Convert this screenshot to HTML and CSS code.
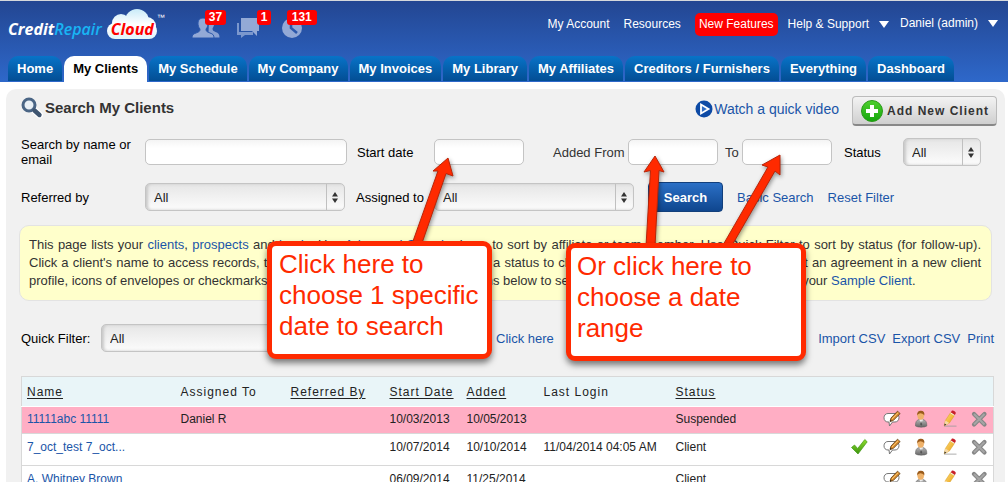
FILE: index.html
```html
<!DOCTYPE html>
<html lang="en">
<head>
<meta charset="utf-8">
<title>My Clients - Credit Repair Cloud</title>
<link rel="stylesheet" href="styles.css">
</head>
<body>
<svg class="defs" aria-hidden="true">
  <defs>
    <linearGradient id="gold" x1="0" y1="0" x2="1" y2="1"><stop offset="0" stop-color="#ffe07a"/><stop offset="1" stop-color="#e89a10"/></linearGradient>
    <linearGradient id="suit" x1="0" y1="0" x2="0" y2="1"><stop offset="0" stop-color="#b5b5b5"/><stop offset="1" stop-color="#666"/></linearGradient>
    <linearGradient id="leaf" x1="0" y1="0" x2="0" y2="1"><stop offset="0" stop-color="#8fdc2c"/><stop offset="1" stop-color="#3d9410"/></linearGradient>
    <linearGradient id="plus" x1="0" y1="0" x2="0" y2="1"><stop offset="0" stop-color="#4fd02f"/><stop offset="1" stop-color="#14a60c"/></linearGradient>
    <linearGradient id="puff" gradientUnits="userSpaceOnUse" x1="0" y1="0" x2="0" y2="31"><stop offset="0" stop-color="#c9ebf8"/><stop offset=".5" stop-color="#fff"/><stop offset="1" stop-color="#dff3fb"/></linearGradient>
    <symbol id="i-note" viewBox="0 0 18 18">
      <path d="M5 3.500h7c2.500 0 4 1.500 4 4s-1.500 4.500-4 4.500H9.500L6.500 16 6 12H5c-2.500 0-4-1.800-4-4.200S2.500 3.500 5 3.500z" fill="#fff" stroke="#777"/>
      <path d="M7 11.500l1-3.500L14.500 1.200l2.600 2.400L10.200 10.600z" fill="#d98b2b" stroke="#5d3a12" stroke-width=".8"/>
      <path d="M9 9l6.200-6.400" stroke="#f8c878"/><path d="M7 11.500l.5-1.700 1.200 1.200z" fill="#222"/>
    </symbol>
    <symbol id="i-user" viewBox="0 0 18 18">
      <path d="M3.500 16c-.3-4 1.200-6 3.500-6.500h4c2.500.5 4 2.500 3.800 6.500-2 1.600-9 1.600-11.300 0z" fill="url(#suit)" stroke="#666" stroke-width=".6"/>
      <path d="M7.300 9.200l2 5 1.600-5z" fill="#fff"/><path d="M9 10l-.8 4.500 1 1.200 1-1.200z" fill="#555"/>
      <ellipse cx="8.700" cy="5.500" rx="3.300" ry="4.200" fill="#efb26a"/>
      <path d="M5.200 5.500C4.800 2 7 .7 9 .8c2.600 0 3.800 2 3.300 4.700C11.500 4 9.500 3.400 8.500 3.300c-1.500.2-2.600.8-3.300 2.200z" fill="#9a5b1c"/>
    </symbol>
    <symbol id="i-edit" viewBox="0 0 18 18">
      <path d="M3 16.200h12.500" stroke="#999" stroke-opacity=".5" stroke-width="1.600"/>
      <path d="M3.200 15.800l1.200-5.300L9.800 2.300l4 2.600-5.500 8.200z" fill="url(#gold)" stroke="#d79a1c" stroke-width=".5"/>
      <path d="M9.800 2.300L11 .6c1.500-.4 3.400.9 3.900 2.400l-1.100 1.900z" fill="#c8202c"/>
      <path d="M9.500 2.900l4 2.500" stroke="#eee" stroke-width="1"/>
      <path d="M4.400 10.500l3.900 2.600-5.100 2.700z" fill="#f5d9a8"/><path d="M3.200 15.800l.5-2.200 1.500 1.200z" fill="#222"/>
    </symbol>
    <symbol id="i-del" viewBox="0 0 18 18">
      <path d="M4 4l10.500 10.500M14.500 4L4 14.500" stroke="#868686" stroke-width="4.200" stroke-linecap="round"/>
      <path d="M4 4l10.500 10.500M14.500 4L4 14.500" stroke="#a5a5a5" stroke-width="2"/>
    </symbol>
    <symbol id="i-check" viewBox="0 0 18 18">
      <path d="M1.500 9.500l3-2.500 3.200 3.500L14.800 1.500l2.400 2.300L8 16z" fill="url(#leaf)" stroke="#3f9a14" stroke-width=".7" stroke-linejoin="round"/>
    </symbol>
  </defs>
</svg>

<div class="page">
  <header class="top">
    <div class="bar">
      <a class="logo" href="#" aria-label="Credit Repair Cloud">
        <span class="word">Credit<span class="repair">Repair</span></span>
        <span class="cloud">
          <svg class="puff" viewBox="0 0 50 31" aria-hidden="true"><g fill="url(#puff)"><rect x="0" y="14" width="50" height="16" rx="8"/><circle cx="14" cy="14" r="9"/><circle cx="30" cy="12" r="12"/><circle cx="40" cy="17" r="9"/></g></svg>
          <span class="cloud-text">Cloud</span>
        </span>
        <span class="tm">™</span>
      </a>
      <div class="alerts">
        <a class="alert people" href="#"><svg width="28" height="20" viewBox="0 0 28 20"><path d="M17 1c4-1 6 2 5 6-.3 1.500-1 2.500-1.500 3.500 0 2 1 2.500 3 3.500 3 1 4 2.500 4 5.500h-7c0-2.500-2-4-4-5z" fill="#8aa2d3"/><path d="M0 20c0-3 1-4 4-5 3-1.200 4-1.500 4-4C6.500 9.500 6 7 6 5c0-3 2-5 5-5s5 2 5 5c0 2-.5 4.500-2 6 0 2.500 1 2.800 4 4 3 1 4 2 4 5z" fill="#93a9d6" stroke="#2d59ac"/></svg><span class="badge">37</span></a>
        <a class="alert chat" href="#"><svg width="23" height="20" viewBox="0 0 23 20"><path d="M0 5h2v9h14v3H8l-4 3v-3H0z" fill="#7b97cd"/><path d="M4 0h18v13h-2v5l-5-5H4z" fill="#93a9d6"/></svg><span class="badge">1</span></a>
        <a class="alert clock" href="#"><svg width="20" height="20" viewBox="0 0 20 20"><circle cx="10" cy="10" r="10" fill="#93a9d6"/><path d="M9 4v6l6 5" fill="none" stroke="#2d59ac" stroke-width="2.600"/></svg><span class="badge">131</span></a>
      </div>
      <nav class="links" aria-label="Account">
        <a href="#">My Account</a>
        <a href="#">Resources</a>
        <a class="new" href="#">New Features</a>
        <a class="drop" href="#">Help &amp; Support</a>
        <a class="drop admin" href="#">Daniel (admin)</a>
      </nav>
    </div>
    <nav class="tabs" aria-label="Main">
      <a href="#">Home</a><a class="on" href="#">My Clients</a><a href="#">My Schedule</a><a href="#">My Company</a><a href="#">My Invoices</a><a href="#">My Library</a><a href="#">My Affiliates</a><a href="#">Creditors / Furnishers</a><a href="#">Everything</a><a href="#">Dashboard</a>
    </nav>
  </header>

  <main class="panel">
    <div class="title">
      <svg width="22" height="22" viewBox="0 0 22 22" aria-hidden="true"><path d="M12.500 12.500l6 5.500" stroke="#fff" stroke-width="7" stroke-linecap="round"/><circle cx="8" cy="8" r="6" fill="#e9f0f6" stroke="#4a6585" stroke-width="3"/><path d="M13.500 13.500l5 4.500" stroke="#3f5570" stroke-width="4.400" stroke-linecap="round"/></svg>
      <h1>Search My Clients</h1>
      <a class="video" href="#"><svg width="18" height="18" viewBox="0 0 18 18" aria-hidden="true"><circle cx="9" cy="9" r="8.500" fill="#0d4aa5"/><path d="M6 4.500L13.500 9 6 13.500z" fill="#2f6cc4" stroke="#fff" stroke-width="1.800"/></svg>Watch a quick video</a>
      <button class="add" type="button"><svg width="22" height="22" viewBox="0 0 22 22" aria-hidden="true"><circle cx="11" cy="11" r="10.500" fill="url(#plus)" stroke="#2a9a1a"/><path d="M11 5v12M5 11h12" stroke="#fff" stroke-width="4"/></svg>Add New Client</button>
    </div>

    <form class="search">
      <div class="line">
        <label class="first" for="q">Search by name or email</label><input id="q" class="wide" type="text">
        <label class="second" for="start">Start date</label><input id="start" type="text">
        <label class="from" for="from">Added From</label><input id="from" type="text">
        <label class="to" for="to">To</label><input id="to" type="text">
        <label class="status" for="status">Status</label><span class="pick small"><select id="status"><option>All</option></select></span>
      </div>
      <div class="line">
        <label class="first" for="ref">Referred by</label><span class="pick"><select id="ref"><option>All</option></select></span>
        <label class="assigned" for="asg">Assigned to</label><span class="pick"><select id="asg"><option>All</option></select></span>
        <button class="go" type="button">Search</button>
        <a class="basic" href="#">Basic Search</a>
        <a class="reset" href="#">Reset Filter</a>
      </div>
    </form>

    <p class="note">This page lists your <a href="#">clients</a>, <a href="#">prospects</a> and <a href="#">leads</a>. Use <a href="#">Advanced Search</a> above to sort by affiliate or team member. Use Quick Filter to sort by status (for follow-up). Click a client's name to access records, to view notes and documents. Click on a status to change it. Click on the blank pages to print an agreement in a new client profile, icons of envelopes or checkmarks could show progress. Click on the icons below to send a letter or view the status. Try this on your <a href="#">Sample Client</a>.</p>

    <div class="filter">
      <label for="quick">Quick Filter:</label><span class="pick"><select id="quick"><option>All</option></select></span>
      <a class="here" href="#">Click here</a>
      <span class="export"><a href="#">Import CSV</a><a href="#">Export CSV</a><a href="#">Print</a></span>
    </div>

    <table class="clients">
      <colgroup><col class="c-name"><col class="c-assigned"><col class="c-ref"><col class="c-date"><col class="c-date"><col class="c-login"><col><col class="c-act"></colgroup>
      <thead><tr><th><a href="#">Name</a></th><th>Assigned To</th><th><a href="#">Referred By</a></th><th><a href="#">Start Date</a></th><th><a href="#">Added</a></th><th>Last Login</th><th><a href="#">Status</a></th><th></th></tr></thead>
      <tbody>
        <tr class="held"><td><a href="#">11111abc 11111</a></td><td>Daniel R</td><td></td><td>10/03/2013</td><td>10/05/2013</td><td></td><td>Suspended</td>
          <td><div class="acts"><svg><use href="#i-note"/></svg><svg><use href="#i-user"/></svg><svg><use href="#i-edit"/></svg><svg><use href="#i-del"/></svg></div></td></tr>
        <tr><td><a href="#">7_oct_test 7_oct...</a></td><td></td><td></td><td>10/07/2014</td><td>10/10/2014</td><td>11/04/2014 04:05 AM</td><td>Client</td>
          <td><div class="acts"><svg class="ok"><use href="#i-check"/></svg><svg><use href="#i-note"/></svg><svg><use href="#i-user"/></svg><svg><use href="#i-edit"/></svg><svg><use href="#i-del"/></svg></div></td></tr>
        <tr><td><a href="#">A. Whitney Brown</a></td><td></td><td></td><td>06/09/2014</td><td>11/25/2014</td><td></td><td>Client</td>
          <td><div class="acts"><svg><use href="#i-note"/></svg><svg><use href="#i-user"/></svg><svg><use href="#i-edit"/></svg><svg><use href="#i-del"/></svg></div></td></tr>
      </tbody>
    </table>
  </main>

  <svg class="arrows" width="1008" height="260" viewBox="0 0 1008 260" aria-hidden="true">
    <g fill="#ff2a00" stroke="#b82508" stroke-width="1" stroke-linejoin="round">
      <path d="M448 158L453 176 446 173.500 421 246 412 244 438 171 433 171z"/>
      <path d="M655 156L664 172 659 170.500 655 246 646 246 650.500 170.500 644 172z"/>
      <path d="M780 155L780 175 775 171 731 247 723 245 768 167 762 165z"/>
    </g>
  </svg>
  <div class="callout one">Click here to choose 1 specific date to search</div>
  <div class="callout two">Or click here to choose a date range</div>
</div>
</body>
</html>
```
FILE: styles.css
```css
* { box-sizing: border-box; }

body {
  margin: 0;
  background: #fff;
  color: #222;
  font: 13px/15px "Liberation Sans", Arial, sans-serif;
}

a { color: #1a55a8; text-decoration: none; }
.defs { position: absolute; width: 0; height: 0; }

.page {
  position: relative;
  height: 100vh;
  overflow: hidden;
}

/* Header */
.top {
  border-top: 1px solid #d5d8dc;
  background: linear-gradient(#234692, #2e68ca);
}

.bar {
  display: flex;
  align-items: flex-start;
  height: 55px;
  padding: 8px 10px 0 8px;
}

.logo {
  display: flex;
  color: #fff;
  font: italic bold 16px/20px "Open Sans", "Noto Sans", sans-serif;
}
.word { padding-top: 10px; }
.repair { color: #18b4f4; font-weight: 600; }
.cloud { position: relative; width: 50px; height: 31px; margin-left: 5px; }
.puff { display: block; width: 50px; height: 31px; }
.cloud-text { position: absolute; left: 4px; top: 10px; color: #f00; }
.tm { padding-top: 4px; font: 8px/10px "Liberation Sans", Arial, sans-serif; }

.alerts { display: flex; gap: 17px; margin-left: 27px; padding-top: 9px; }
.alert { position: relative; height: 20px; }
.alert svg { display: block; }
.badge {
  position: absolute;
  left: 13px;
  top: -8px;
  padding: 0 4px;
  border-radius: 3px;
  background: #f00;
  color: #fff;
  font-size: 12px;
  font-weight: bold;
}
.chat .badge { left: 20px; }
.clock { margin-left: 5px; }
.clock .badge { left: 5px; padding: 0 5px; }

.links {
  display: flex;
  align-items: center;
  margin-left: auto;
  padding-top: 4px;
  gap: 14px;
  font-size: 12px;
}
.links a { color: #fff; white-space: nowrap; }
.links .new {
  padding: 4px;
  border-radius: 5px;
  background: #f00;
}
.links .drop { display: flex; align-items: center; gap: 10px; margin-left: -4px; }
.links .admin { margin-left: -3px; padding-bottom: 3px; }
.drop::after {
  content: "";
  border: 5px solid transparent;
  border-top: 7px solid #fff;
  border-bottom: 0;
}

.tabs { display: flex; gap: 2px; padding: 0 8px 1px; }
.tabs a {
  height: 25px;
  padding: 0 9px;
  border-radius: 10px 10px 0 0;
  background: linear-gradient(#0873c8, #034e94);
  color: #fff;
  font-weight: bold;
  line-height: 25px;
  white-space: nowrap;
}
.tabs .on { height: 26px; margin-bottom: -1px; background: #fff; color: #000; }

/* Panel */
.panel {
  margin: 7px 3px 0 6px;
  padding: 7px 11px 0 15px;
  border-radius: 10px 10px 0 0;
  background: #f1f1f1;
}

.title { display: flex; align-items: center; height: 30px; margin-right: -3px; }
h1 { margin: 0 auto 0 2px; padding-bottom: 8px; color: #333; font-size: 15px; line-height: 17px; }
.title > svg { margin-bottom: 6px; }
.video { display: flex; align-items: center; gap: 1px; margin-right: 13px; padding-bottom: 4px; font-size: 14px; }
.add {
  display: flex;
  align-items: center;
  gap: 4px;
  height: 30px;
  padding: 0 7px 0 8px;
  border: 1px solid #bbb;
  border-bottom: 2px solid #888;
  border-radius: 4px;
  background: linear-gradient(#f3f3f3, #cfcfcf);
  color: #333;
  font: bold 12px/14px "Liberation Sans", Arial, sans-serif;
  letter-spacing: 1px;
  white-space: nowrap;
}

.search { display: grid; gap: 13px; margin-top: 10px; color: #000; }
.line { display: flex; align-items: center; height: 32px; }
.line label, .line a, .line button, .line input, .pick { flex: none; }
.first { width: 124px; }
.second { width: 87px; padding-left: 10px; }
.from { width: 104px; padding-left: 29px; color: #333; }
.to { width: 24px; padding-left: 7px; color: #333; }
.status { width: 71px; padding-left: 12px; }
.assigned { width: 89px; padding-left: 11px; }

input {
  width: 90px;
  height: 26px;
  padding: 0 8px;
  border: 1px solid #c4c4c4;
  border-radius: 5px;
  background: linear-gradient(#f4f4f4, #fff 8px);
  font: inherit;
}
.wide { width: 202px; }

.pick { position: relative; width: 200px; height: 28px; }
.pick.small { width: 78px; }
.pick select {
  width: 100%;
  height: 28px;
  padding: 0 26px 0 8px;
  border: 1px solid #c4c4c4;
  border-radius: 5px;
  appearance: none;
  background: linear-gradient(#e6e6e6, #fcfcfc);
  box-shadow: inset 2px 0 3px #c8c8c8;
  color: #222;
  font: inherit;
}
.pick::before {
  content: "";
  position: absolute;
  right: 18px;
  top: 1px;
  height: 26px;
  border-left: 1px solid #c0c0c0;
}
.pick::after {
  content: "";
  position: absolute;
  right: 7px;
  top: 9px;
  width: 6px;
  height: 11px;
  background: #333;
  clip-path: polygon(50% 0, 100% 42%, 0 42%, 0 58%, 100% 58%, 50% 100%, 0 58%, 0 42%);
}

.go {
  width: 75px;
  height: 30px;
  margin-left: 14px;
  border: 1px solid #123f7c;
  border-radius: 4px;
  background: linear-gradient(#2b70c6, #0f468e);
  color: #fff;
  font: bold 13px/15px "Liberation Sans", Arial, sans-serif;
}
.basic { margin-left: 14px; }
.reset { margin-left: 14px; }

.note {
  margin: 12px 2px 0 -2px;
  padding: 10px 10px 10px 9px;
  border: 1px solid #e3e3e3;
  border-radius: 10px;
  background: #ffffcb;
  color: #333;
  line-height: 18px;
  text-align: justify;
}

.filter { display: flex; align-items: center; height: 28px; margin-top: 23px; color: #000; }
.filter label { width: 80px; }
.here { margin-left: 195px; }
.export { display: flex; gap: 7px; margin-left: auto; }

/* Client list */
.clients {
  width: 100%;
  margin-top: 24px;
  border: 1px solid #d8d8d8;
  border-collapse: collapse;
  table-layout: fixed;
  background: #fff;
  font-size: 12px;
  line-height: 14px;
}
.c-name { width: 154px; }
.c-assigned { width: 110px; }
.c-ref { width: 99px; }
.c-date { width: 77px; }
.c-login { width: 132px; }
.c-act { width: 150px; }
.clients th {
  height: 30px;
  padding: 0 5px;
  background: #e9f5f8;
  font-weight: normal;
  letter-spacing: 1px;
  text-align: left;
}
.clients th a { color: #222; text-decoration: underline; text-underline-offset: 2px; }
.clients td { height: 32px; padding: 0 5px 5px; border-top: 1px solid #d8d8d8; white-space: nowrap; }
.clients .held td { height: 27px; padding-bottom: 2px; border-top-color: #fff; background: #ffaec4; }
.acts { display: flex; justify-content: flex-end; gap: 11px; }
.acts svg { width: 18px; height: 18px; }
.acts .ok { margin-right: 4px; }

/* Annotations */
.arrows { position: absolute; left: 0; top: 0; filter: drop-shadow(1px 2px 2px rgba(0, 0, 0, .4)); }
.callout {
  position: absolute;
  border: 5px solid #ff2a00;
  border-radius: 9px;
  background: #fff;
  box-shadow: 0 4px 6px rgba(0, 0, 0, .5);
  color: #ff2a00;
  font-size: 26px;
  line-height: 31px;
}
.one { left: 267px; top: 241px; width: 225px; height: 118px; padding: 3px 0 0 7px; }
.two { left: 566px; top: 243px; width: 240px; height: 118px; padding: 3px 20px 0 6px; }
```
